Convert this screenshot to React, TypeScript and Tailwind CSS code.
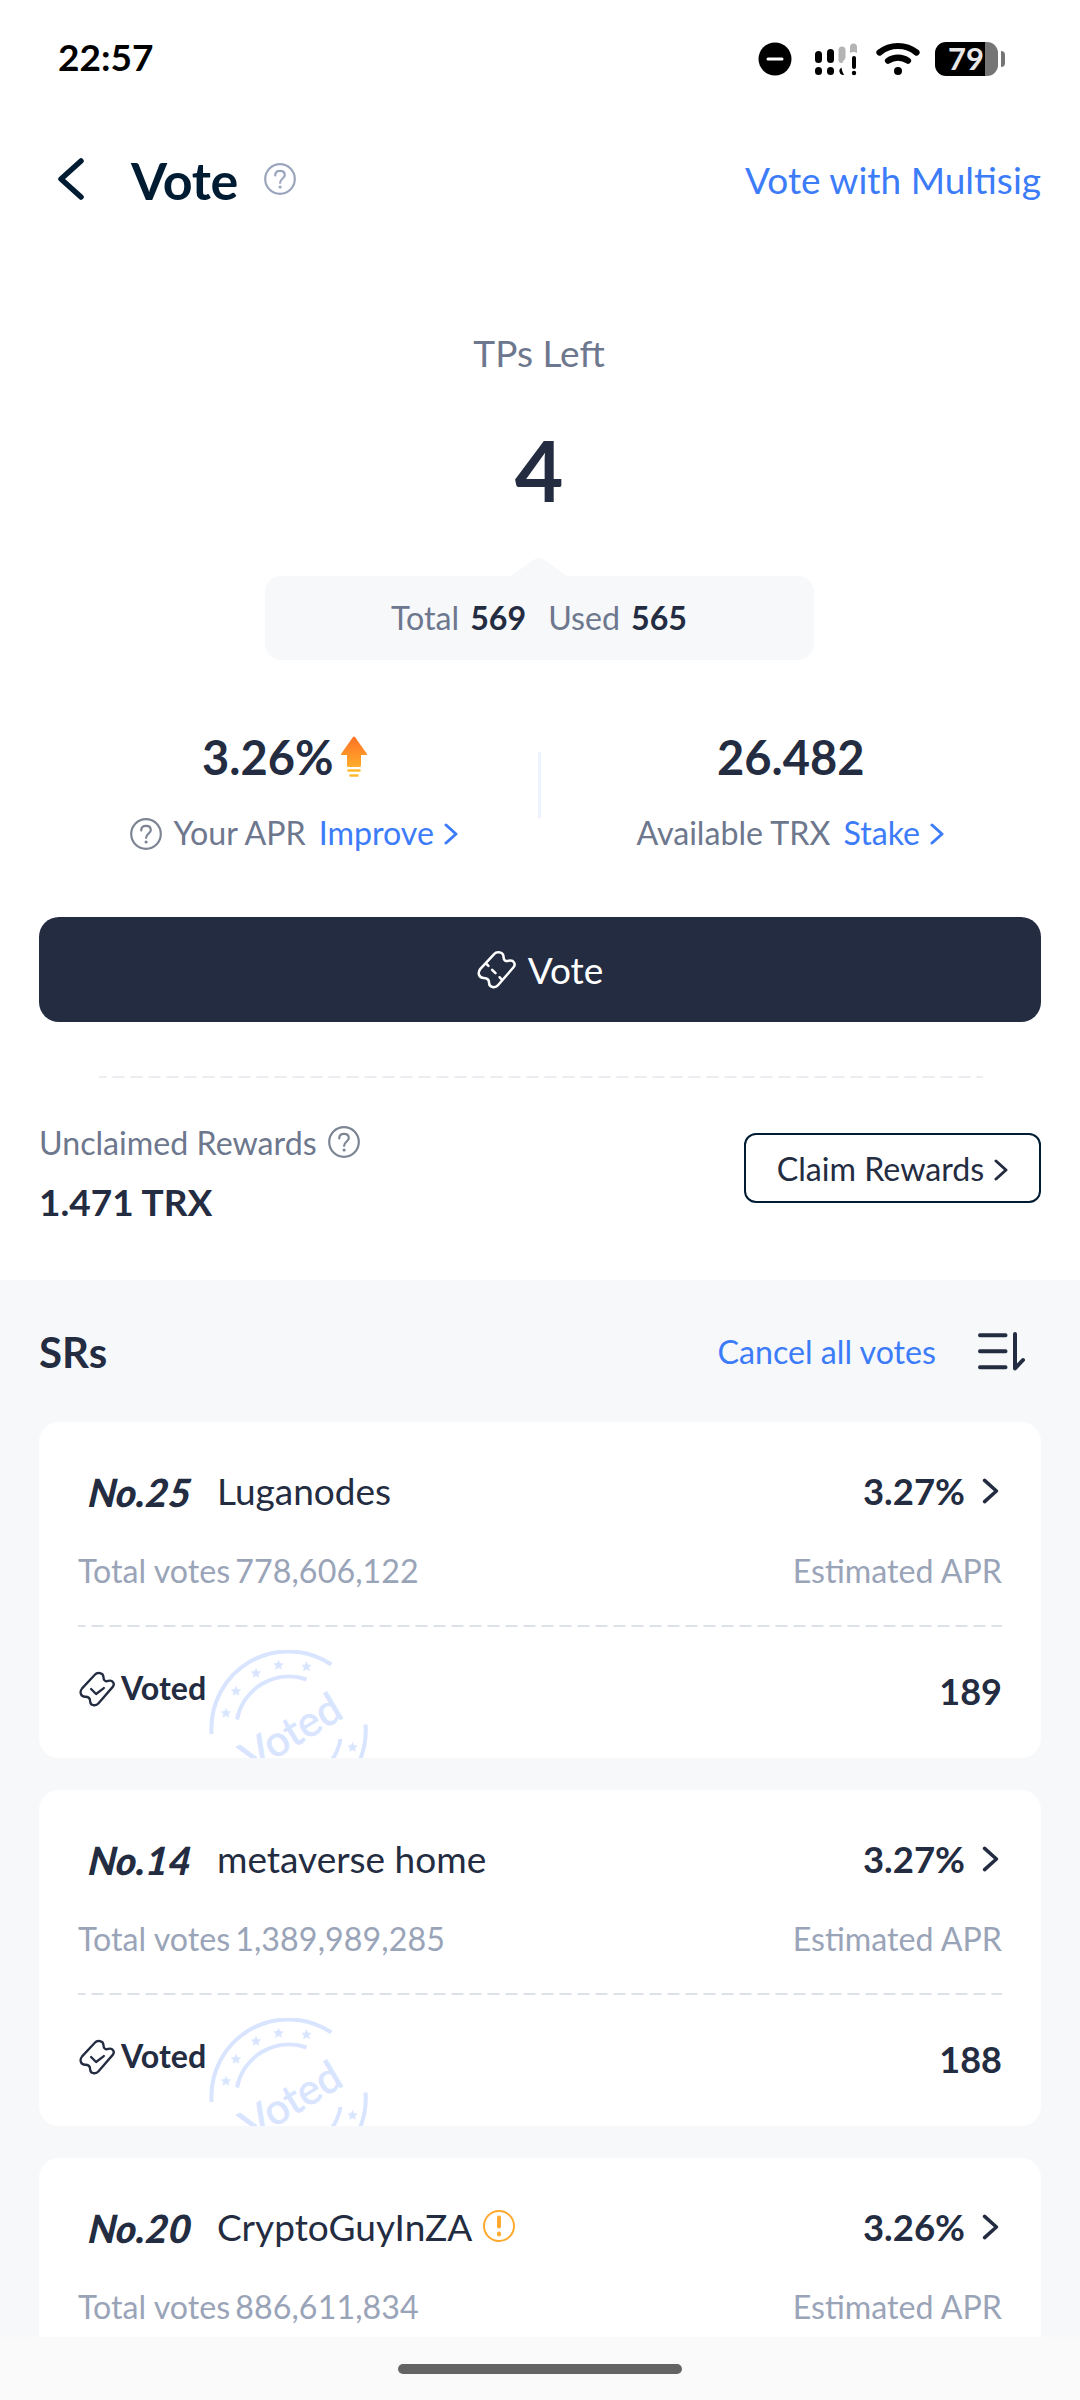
type IconProps = {
  className?: string;
};

type Representative = {
  rank: number;
  name: string;
  apr: string;
  totalVotes: string;
  voted: number;
  warning?: boolean;
};

const representatives: Representative[] = [
  { rank: 25, name: "Luganodes", apr: "3.27%", totalVotes: "778,606,122", voted: 189 },
  { rank: 14, name: "metaverse home", apr: "3.27%", totalVotes: "1,389,989,285", voted: 188 },
  { rank: 20, name: "CryptoGuyInZA", apr: "3.26%", totalVotes: "886,611,834", voted: 188, warning: true },
];

const ticketOutline =
  "M9 55 50 11C58 2 78 4 78 20C78 29 84 34 93 31C108 27 116 41 107 51L62 103C53 114 35 110 35 97C35 87 29 82 19 82C4 82 0 66 9 55Z";

function HelpIcon({ className }: IconProps) {
  return (
    <svg viewBox="0 0 32 32" fill="none" stroke="currentColor" strokeWidth="2.200" className={`size-8 shrink-0 ${className}`}>
      <circle cx="16" cy="16" r="14.800" />
      <path d="M11.2 12.4C11.2 9.6 13.2 7.9 16 7.9S20.8 9.6 20.8 12.2C20.8 15.4 16.1 15.8 16.1 19.8" strokeLinecap="round" />
      <circle cx="16.1" cy="24" r="1.6" fill="currentColor" stroke="none" />
    </svg>
  );
}

function ChevronRight({ className }: IconProps) {
  return (
    <svg viewBox="0 0 14 22" fill="none" stroke="currentColor" strokeWidth="3" strokeLinecap="round" strokeLinejoin="round" className={`shrink-0 ${className}`}>
      <path d="M2 2 12 11 2 20" />
    </svg>
  );
}

function TicketIcon({ className, checked }: IconProps & { checked?: boolean }) {
  return (
    <svg viewBox="-1 -1 116 116" fill="none" stroke="currentColor" strokeWidth="7.500" strokeLinecap="round" strokeLinejoin="round" className={`shrink-0 ${className}`}>
      <path d={ticketOutline} />
      {checked ? <path d="M38 57 54 73 79 54" /> : <path d="M27 40 33 46M44 58 54 68M66 80 73 87" />}
    </svg>
  );
}

function BoostIcon() {
  return (
    <svg viewBox="0 0 26 42" className="ml-[8px] h-[42px] w-[26px]">
      <defs>
        <linearGradient id="boost" x1="0" y1="0" x2="0" y2="1">
          <stop offset="0" stopColor="#ff7025" />
          <stop offset="1" stopColor="#ffad2a" />
        </linearGradient>
      </defs>
      <path d="M12 1Q13 0 14 1L26 18Q26.500 19 25 19H20V29.500Q20 31 18.500 31H7.500Q6 31 6 29.500V19H1Q-.5 19 0 18Z" fill="url(#boost)" />
      <path d="M7.500 34.500H18.500M9.500 39.500H16.500" stroke="#ffb92e" strokeWidth="2.600" strokeLinecap="round" />
    </svg>
  );
}

function DashedLine({ className }: IconProps) {
  return (
    <svg className={`block h-[2px] ${className}`}>
      <line x1="0" y1="1" x2="100%" y2="1" stroke="currentColor" strokeWidth="2" strokeDasharray="12 6" strokeDashoffset="4.500" />
    </svg>
  );
}

function SortIcon() {
  return (
    <svg viewBox="0 0 48 40" fill="none" stroke="currentColor" strokeWidth="4" strokeLinecap="round" strokeLinejoin="round" className="h-10 w-12">
      <path d="M2 4.300H27.500M2 20.300H27.500M2 36.200H27.500M37 3V37.500L45 29" />
    </svg>
  );
}

const stampStars = [
  [17, 63],
  [27, 41],
  [47, 23],
  [69.5, 15],
  [97.5, 16.5],
  [143.5, 97],
];

function VotedStamp() {
  return (
    <svg viewBox="0 0 160 108" className="absolute bottom-0 left-[170px] h-[108px] w-[160px] text-[#d9e5ff]">
      <g fill="none" stroke="currentColor" strokeWidth="4">
        <path d="M2.600 84A77 77 0 0 1 122.300 14.500" />
        <path d="M156.500 74.500A77 77 0 0 1 147 118" />
        <path d="M28 69.500A53 53 0 0 1 97.500 29.500" />
        <path d="M131.500 89A53 53 0 0 1 119 115" />
      </g>
      {stampStars.map(([x, y]) => (
        <path
          key={x}
          d="M0-4.600 1.400-1.500 4.700-1.200 2.200 1 3 4.300 0 2.600-3 4.300-2.200 1-4.700-1.200-1.400-1.500Z"
          transform={`translate(${x} ${y})`}
          fill="currentColor"
          stroke="currentColor"
          strokeWidth="0.600"
        />
      ))}
      <text x="0" y="0" transform="translate(42.500 123) rotate(-31)" fontSize="42" fill="currentColor" stroke="currentColor" strokeWidth="0.800">
        Voted
      </text>
    </svg>
  );
}

function StatusBar() {
  return (
    <div className="flex h-[118px] items-center justify-between pl-[58px] pr-[75px] text-black">
      <span className="pb-[5px] text-[37px] font-bold leading-none">22:57</span>
      <div className="flex items-center">
        <svg viewBox="0 0 34 34" className="size-[34px]">
          <circle cx="17" cy="17" r="16.500" />
          <path d="M10 17H24" stroke="white" strokeWidth="3" strokeLinecap="round" />
        </svg>
        <svg viewBox="0 0 44 34" className="ml-[22px] h-[34px] w-[44px]">
          <rect x="1" y="9" width="7" height="12" rx="3.500" />
          <rect x="1" y="25" width="7" height="8" rx="3.500" />
          <rect x="13" y="7" width="7" height="14" rx="3.500" />
          <rect x="13" y="25" width="7" height="8" rx="3.500" />
          <path d="M24.500 8a3.500 3.500 0 0 1 7 0V15C31.500 18 29 18 28.500 21A3.500 3.500 0 0 1 24.500 18Z" fill="#b4b4b4" />
          <path d="M27.500 25.500C28 29 28.500 30 30 33H28.500A4 4 0 0 1 27.500 25.500Z" />
          <path d="M36 11V5A3.500 3.500 0 0 1 43 5V11Q39.500 9 36 11Z" fill="#b4b4b4" />
          <rect x="38" y="14" width="4" height="13" rx="2" />
          <circle cx="40" cy="31" r="2.200" />
        </svg>
        <svg viewBox="0 0 44 34" className="ml-[18px] h-[34px] w-[44px]" fill="none" stroke="black" strokeWidth="6.200" strokeLinecap="round">
          <path d="M3.500 10.500C14 1.800 30 1.800 40.500 10.500" />
          <path d="M12 18.700C18 14.500 26 14.500 32 18.700" />
          <circle cx="22" cy="29" r="4" fill="black" stroke="none" />
        </svg>
        <div className="ml-[15px] flex h-[34px] w-[63px] items-center">
          <div className="flex h-full w-[50px] items-center justify-end rounded-l-[11px] bg-black pb-px pr-px text-[31px] font-bold leading-none text-[#e8e8e8]">
            79
          </div>
          <div className="h-full w-[13px] rounded-r-[11px] bg-[#757575]" />
        </div>
        <div className="ml-[3px] h-4 w-1 rounded-r-full bg-[#757575]" />
      </div>
    </div>
  );
}

function RepresentativeCard({ item }: { item: Representative }) {
  return (
    <article className="relative h-[336px] shrink-0 overflow-hidden rounded-[20px] bg-white px-[39px] pt-[39px]">
      <div className="flex h-[60px] items-center text-[37px] leading-none">
        <span className="w-[139px] pt-[2px]">
          <span className="ml-[11px] inline-block -skew-x-6 text-[39px] font-black italic leading-none">No.{item.rank}</span>
        </span>
        <span className="pb-px">{item.name}</span>
        {item.warning && (
          <svg viewBox="0 0 32 32" fill="none" stroke="#ffa92e" className="mb-[2px] ml-[11px] size-8">
            <circle cx="16" cy="16" r="15" strokeWidth="2" />
            <path d="M16 7.500V16.500M16 23.500V24.500" strokeWidth="4" strokeLinecap="round" />
          </svg>
        )}
        <span className="ml-auto text-[36.5px] font-bold leading-none">{item.apr}</span>
        <ChevronRight className="ml-[17px] mr-[3px] h-[26px] w-[17px]" />
      </div>
      <div className="mt-[29px] flex h-10 items-center justify-between pt-[3px] text-[32.2px] leading-none text-[#9aa4b8]">
        <span className="flex gap-[5px]">
          <span>Total votes</span>
          <span className="tracking-[0.1px]">{item.totalVotes}</span>
        </span>
        <span>Estimated APR</span>
      </div>
      <DashedLine className="mt-[35px] w-full text-[#dde1e9]" />
      <div className="mt-[40px] flex h-10 items-center justify-between font-bold leading-none">
        <span className="flex items-center pl-px pt-[3px] text-[32.2px]">
          <TicketIcon checked className="mr-[6px] size-[36px]" />
          Voted
        </span>
        <span className="pt-[7px] text-4xl leading-none">{item.voted}</span>
      </div>
      <VotedStamp />
    </article>
  );
}

export default function App() {
  return (
    <main className="flex h-[2400px] w-[1080px] flex-col overflow-hidden bg-white font-['Lato',sans-serif] text-[#232c41]">
      <StatusBar />

      <header className="flex h-[122px] items-center pl-[57px] pr-[39px]">
        <svg viewBox="0 0 27 42" fill="none" stroke="#001c33" strokeWidth="5.500" strokeLinecap="round" strokeLinejoin="round" className="h-[42px] w-[27px]">
          <path d="M24 3 4 21 24 39" />
        </svg>
        <h1 className="ml-[47px] pt-[2px] text-[52px] font-bold leading-none tracking-[-0.3px] text-[#001c33]">Vote</h1>
        <HelpIcon className="ml-[26px] text-[#9ba6be]" />
        <a className="ml-auto pt-px text-[37px] leading-none text-[#3c7cf9]">Vote with Multisig</a>
      </header>

      <section className="flex flex-col items-center pr-[2px]">
        <p className="mt-[93px] text-[37px] leading-10 text-[#6d778d]">TPs Left</p>
        <p className="mt-[47px] text-[84px] font-bold leading-[100px]">4</p>
        <svg viewBox="0 0 56 18" className="mt-[38px] h-[18px] w-[56px]">
          <path d="M0 18 21 3Q28-3 35 3L56 18Z" fill="#f7f8fa" />
        </svg>
        <div className="flex h-[84px] w-[549px] items-center justify-center rounded-[16px] bg-[#f7f8fa] text-[32.2px] leading-none">
          <span className="text-[#6d778d]">Total</span>
          <span className="ml-[11px] font-bold">569</span>
          <span className="ml-[22px] text-[#6d778d]">Used</span>
          <span className="ml-[11px] font-bold">565</span>
        </div>
      </section>

      <section className="mt-[66px] flex h-[126px] pl-[38px] pr-10">
        <div className="flex flex-1 flex-col items-center">
          <div className="flex h-[60px] items-center pr-[6px] pt-[3px] text-[47px] font-bold leading-none">
            3.26%
            <BoostIcon />
          </div>
          <div className="mt-[27px] flex h-10 items-center pl-[13px] pt-[2px] text-[32.2px] leading-none text-[#6d778d]">
            <HelpIcon className="mr-[11px] mt-px text-[#7d8594]" />
            Your APR
            <a className="ml-[13px] text-[#3c7cf9]">Improve</a>
            <ChevronRight className="ml-[10px] mt-px h-[22px] w-[14px] text-[#3c7cf9]" />
          </div>
        </div>
        <div className="mt-[26px] h-[66px] w-[3px] bg-[#edf2ff]" />
        <div className="flex flex-1 flex-col items-center">
          <div className="flex h-[60px] items-center pl-px pt-[3px] text-[47px] font-bold leading-none">26.482</div>
          <div className="mt-[27px] flex h-10 items-center pt-[2px] text-[32.2px] leading-none text-[#6d778d]">
            Available TRX
            <a className="ml-[13px] text-[#3c7cf9]">Stake</a>
            <ChevronRight className="ml-[10px] mt-px h-[22px] w-[14px] text-[#3c7cf9]" />
          </div>
        </div>
      </section>

      <button className="mx-[39px] mt-[65px] flex h-[105px] items-center justify-center rounded-[20px] bg-[#232c41] text-[37px] leading-none text-white">
        <TicketIcon className="mr-3 size-[39px]" />
        Vote
      </button>

      <DashedLine className="mx-[99px] mt-[54px] w-[884px] shrink-0 text-[#ececf1]" />

      <section className="mt-11 flex h-[158px] justify-between px-[39px]">
        <div>
          <div className="flex h-10 items-center gap-[11px] pt-[2px] text-[32.2px] leading-none text-[#6d778d]">
            Unclaimed Rewards
            <HelpIcon className="mb-[3px] text-[#7d8594]" />
          </div>
          <p className="mt-5 text-[37px] font-bold leading-10">1.471 TRX</p>
        </div>
        <button className="mt-[11px] flex h-[70px] w-[297px] items-center justify-center rounded-[12px] border-2 border-[#001c33] pt-[3px] text-[32.2px] leading-none">
          Claim Rewards
          <ChevronRight className="ml-[10px] mt-px h-[22px] w-[14px]" />
        </button>
      </section>

      <section className="flex min-h-0 flex-1 flex-col overflow-hidden bg-[#f7f8fa] px-[39px]">
        <div className="flex h-[142px] shrink-0 items-center">
          <h2 className="pt-px text-[42px] font-bold leading-none">SRs</h2>
          <a className="ml-auto mr-[42px] pt-[2px] text-[32.2px] leading-none text-[#3c7cf9]">Cancel all votes</a>
          <div className="mr-[15px]">
            <SortIcon />
          </div>
        </div>
        <div className="flex flex-col gap-8">
          {representatives.map((item) => (
            <RepresentativeCard key={item.rank} item={item} />
          ))}
        </div>
      </section>

      <footer className="flex h-[63px] shrink-0 justify-center bg-[#fafafa] pt-[27px]">
        <div className="h-[10px] w-[284px] rounded-full bg-[#646464]" />
      </footer>
    </main>
  );
}
